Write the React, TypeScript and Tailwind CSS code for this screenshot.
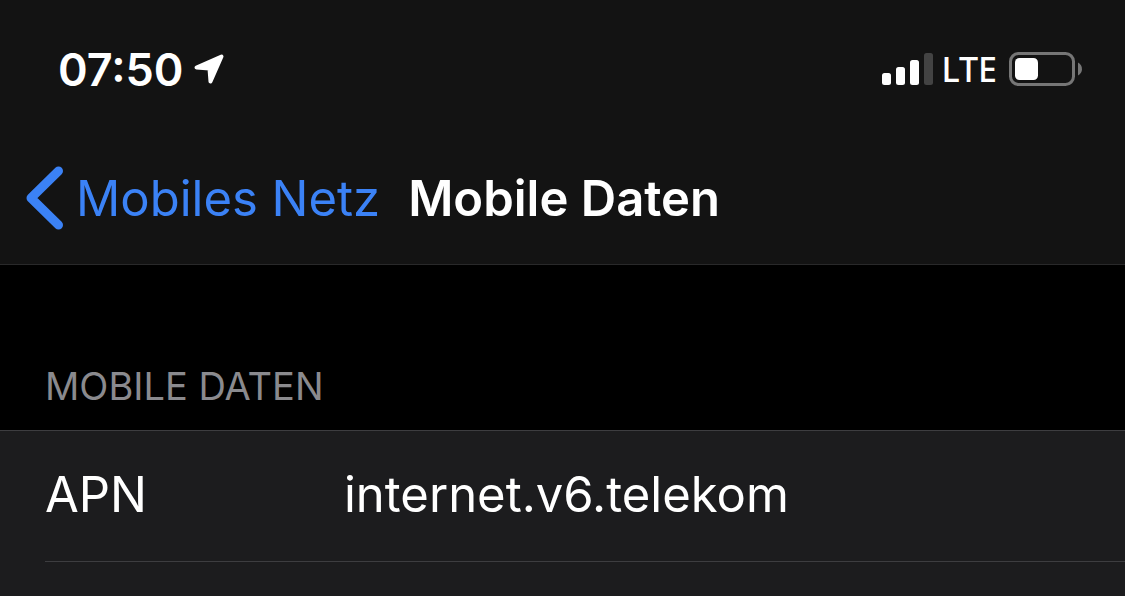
import React, { useState } from "react";

const StatusBar = () => {
  return (
    <div className="flex h-[132px] items-center justify-between pt-1.5 pr-[42px] pl-[58px]">
      <div className="flex items-center gap-2.5">
        <time className="text-[45px] leading-none font-semibold">07:50</time>
        <svg width="32" height="32" viewBox="0 0 32 32" aria-label="Location">
          <path
            d="M2.5 14.5 L27.5 3.5 L16.5 28.5 L15.5 15.5 Z"
            fill="white"
            stroke="white"
            strokeWidth="4"
            strokeLinejoin="round"
          />
        </svg>
      </div>

      <div className="flex items-center">
        <svg width="51" height="34" viewBox="0 0 51 34" aria-label="Signal">
          <rect x="0" y="21" width="9" height="12" rx="2.5" fill="white" />
          <rect x="14" y="15" width="9" height="18" rx="2.5" fill="white" />
          <rect x="28" y="8" width="9" height="25" rx="2.5" fill="white" />
          <rect x="42" y="1" width="9" height="32" rx="2.5" fill="#434343" />
        </svg>
        <span className="ml-2 font-['Noto_Sans',sans-serif] text-[34px] leading-none font-medium">
          LTE
        </span>
        <svg
          className="ml-3"
          width="74"
          height="34"
          viewBox="0 0 74 34"
          aria-label="Battery"
        >
          <rect
            x="1.5"
            y="1.5"
            width="63"
            height="31"
            rx="8"
            fill="none"
            stroke="#767676"
            strokeWidth="3"
          />
          <rect x="6" y="6" width="23" height="22" rx="4.5" fill="white" />
          <path d="M69 10.5 C74.3 13 74.3 21 69 23.5 Z" fill="#767676" />
        </svg>
      </div>
    </div>
  );
};

const App = () => {
  const [apn, setApn] = useState("internet.v6.telekom");

  return (
    <div className="flex min-h-screen flex-col bg-black font-['Inter',sans-serif] text-white">
      <header className="border-b border-[#29292a] bg-[#131313]">
        <StatusBar />
        <nav className="flex h-[132px] items-center gap-7 pl-6">
          <a href="#mobiles-netz" className="flex items-center gap-3 text-[#3b82f6]">
            <svg width="40" height="64" viewBox="0 0 40 64" aria-hidden="true">
              <path
                d="M34.5 5 L7 32 L34.5 59"
                fill="none"
                stroke="currentColor"
                strokeWidth="9"
                strokeLinecap="round"
                strokeLinejoin="round"
              />
            </svg>
            <span className="text-[49px] leading-none">Mobiles Netz</span>
          </a>
          <h1 className="text-[49px] leading-none font-semibold">
            Mobile Daten
          </h1>
        </nav>
      </header>

      <main className="flex flex-1 flex-col">
        <h2 className="px-[45px] pt-[102px] pb-6 text-[38px] leading-[39px] text-[#8a8a8e] uppercase">
          Mobile Daten
        </h2>
        <form className="flex-1 border-t border-[#3d3d40] bg-[#1c1c1e] pl-[45px]">
          <div className="flex h-[131px] items-center border-b border-[#3d3d40] pb-1 text-[49px]">
            <label htmlFor="apn" className="w-[299px] leading-none">
              APN
            </label>
            <input
              id="apn"
              type="text"
              className="h-20 min-w-0 flex-1 bg-transparent outline-none"
              value={apn}
              onChange={(e) => setApn(e.target.value)}
            />
          </div>
        </form>
      </main>
    </div>
  );
};

export default App;
